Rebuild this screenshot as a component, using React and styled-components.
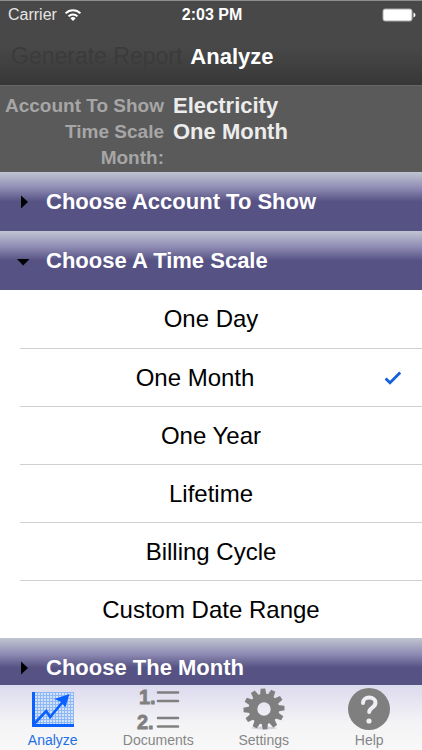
import React, { useState } from "react";
import styled, { createGlobalStyle } from "styled-components";

const scales = ["One Day", "One Month", "One Year", "Lifetime", "Billing Cycle", "Custom Date Range"];

const gearTeeth = Array.from({ length: 12 }, (_, i) => i * 30 - 3);

const WifiIcon = () => (
  <svg width="18" height="14" viewBox="0 0 18 14" fill="none" stroke="#fff" strokeWidth="2">
    <path d="M1.6 5.4a10.4 10.4 0 0 1 14.8 0" />
    <path d="M4.5 8.4a6.3 6.3 0 0 1 9 0" />
    <path d="M9 13 6.3 10.3a3.8 3.8 0 0 1 5.4 0z" fill="#fff" stroke="none" />
  </svg>
);

const BatteryIcon = () => (
  <svg width="34" height="14" viewBox="0 0 34 14">
    <rect x="1" y="1" width="29" height="12" rx="2" fill="#fff" stroke="#a9a9a9" />
    <path d="M31.5 4.6q2 .8 2 2.4t-2 2.4z" fill="#fff" />
  </svg>
);

const CheckIcon = () => (
  <svg width="18" height="14" viewBox="0 0 18 14" fill="none" stroke="#1460dc" strokeWidth="2.8">
    <path d="M1.6 7.4 6 11.8 16.2 1.6" />
  </svg>
);

const ArrowIcon = ({ open }) => (
  <svg width="14" height="14" viewBox="0 0 14 14">
    <path d={open ? "M1 5h12.5L7.2 11.5z" : "M5 .5v13L12 7z"} />
  </svg>
);

const ChartIcon = () => (
  <svg width="42" height="42" viewBox="0 0 42 42">
    <path d="M2 4h40v34H2z" fill="#d2e2fa" />
    <path
      d="M5.5 4v32M8.5 4v32M11.5 4v32M14.5 4v32M17.5 4v32M20.5 4v32M23.5 4v32M26.5 4v32M29.5 4v32M32.5 4v32M35.5 4v32M38.5 4v32M41.5 4v32M2 4.5h40M2 7.5h40M2 10.5h40M2 13.5h40M2 16.5h40M2 19.5h40M2 22.5h40M2 25.5h40M2 28.5h40M2 31.5h40M2 34.5h40"
      stroke="#8db7f5"
      strokeWidth="1"
    />
    <path d="M0 4h3v32h39v3H0z" fill="#0a5fff" />
    <path d="m2 36 12.2-13 4 6L31 13.5" fill="none" stroke="#0a5fff" strokeWidth="2.6" />
    <path d="m37.5 6-4.2 13.5-4.3-5.8-6.7-2.7z" fill="#0a5fff" />
  </svg>
);

const ListIcon = () => (
  <SListSvg width="42" height="42" viewBox="0 0 42 42" fill="#808080" stroke="#808080">
    <text x="2" y="16" strokeWidth="0.8">1.</text>
    <text x="0" y="41" strokeWidth="0.8">2.</text>
    <path d="M21 4.5h20M21 13h20M21 30h20M21 38.5h20" strokeWidth="2.6" strokeLinecap="round" />
  </SListSvg>
);

const GearIcon = () => (
  <svg width="42" height="42" viewBox="0 0 42 42" fill="#7f7f7f">
    <ellipse cx="21" cy="40" rx="13" ry="1.5" fill="#d2d2dc" />
    {gearTeeth.map((angle) => (
      <path key={angle} d="M17.8 7 18.7.5h4.6L24.2 7z" transform={`rotate(${angle} 21 21)`} />
    ))}
    <circle cx="21" cy="21" r="11" fill="none" stroke="#7f7f7f" strokeWidth="8.6" />
  </svg>
);

const HelpIcon = () => (
  <svg width="42" height="42" viewBox="0 0 42 42">
    <circle cx="21" cy="21" r="21" fill="#7f7f7f" />
    <path
      d="M15 15c0-3.6 2.6-5.4 6.2-5.4 3.7 0 6.3 1.9 6.3 5.1 0 5-6.3 4.6-6.3 9.3"
      fill="none"
      stroke="#eeeef4"
      strokeWidth="4"
      strokeLinecap="round"
    />
    <circle cx="21" cy="33" r="2.6" fill="#eeeef4" />
  </svg>
);

const tabs = [
  { name: "Analyze", Icon: ChartIcon },
  { name: "Documents", Icon: ListIcon },
  { name: "Settings", Icon: GearIcon },
  { name: "Help", Icon: HelpIcon },
];

const Section = ({ title, open, onToggle, children }) => (
  <section>
    <SSectionTitle>
      <SSectionButton type="button" aria-expanded={open} onClick={onToggle}>
        <ArrowIcon open={open} />
        {title}
      </SSectionButton>
    </SSectionTitle>
    {open && children}
  </section>
);

export default function App() {
  const [open, setOpen] = useState("scale");
  const [scale, setScale] = useState("One Month");
  const [tab, setTab] = useState("Analyze");

  const toggle = (name) => setOpen(open === name ? "" : name);

  return (
    <>
      <GlobalStyle />
      <SScreen>
        <SHeader>
          <SStatusBar>
            <SCarrier>
              Carrier
              <WifiIcon />
            </SCarrier>
            <STime>2:03 PM</STime>
            <SBattery>
              <BatteryIcon />
            </SBattery>
          </SStatusBar>
          <SNav>
            <SReportButton type="button">Generate Report</SReportButton>
            <STitle>Analyze</STitle>
          </SNav>
        </SHeader>
        <SSummary>
          <dt>Account To Show</dt>
          <dd>Electricity</dd>
          <dt>Time Scale</dt>
          <dd>{scale}</dd>
          <dt>Month:</dt>
          <dd></dd>
        </SSummary>
        <SMain>
          <Section title="Choose Account To Show" open={open === "account"} onToggle={() => toggle("account")} />
          <Section title="Choose A Time Scale" open={open === "scale"} onToggle={() => toggle("scale")}>
            <SOptions>
              {scales.map((name) => (
                <SOption key={name}>
                  <SOptionButton type="button" aria-pressed={name === scale} onClick={() => setScale(name)}>
                    <span>{name}</span>
                    {name === scale && <CheckIcon />}
                  </SOptionButton>
                </SOption>
              ))}
            </SOptions>
          </Section>
          <Section title="Choose The Month" open={open === "month"} onToggle={() => toggle("month")} />
        </SMain>
        <STabBar>
          {tabs.map(({ name, Icon }) => (
            <STab key={name} type="button" $active={name === tab} onClick={() => setTab(name)}>
              <Icon />
              {name}
            </STab>
          ))}
        </STabBar>
      </SScreen>
    </>
  );
}

const GlobalStyle = createGlobalStyle`
  * {
    box-sizing: border-box;
  }
  body {
    margin: 0;
    background: #fff;
    font-family: "Liberation Sans", Arial, sans-serif;
  }
  button {
    margin: 0;
    padding: 0;
    border: 0;
    background: none;
    font: inherit;
    color: inherit;
    cursor: pointer;
  }
  svg {
    display: block;
    flex: none;
  }
`;

const SListSvg = styled.svg`
  overflow: visible;
  font-size: 20px;
  font-weight: 700;
`;

const SScreen = styled.div`
  display: flex;
  flex-direction: column;
  height: 100vh;
`;

const SHeader = styled.header`
  flex: none;
  border-top: 1px solid #8c8e8c;
  background: linear-gradient(#484848 55%, #373737);
  color: #fff;
`;

const SStatusBar = styled.div`
  display: grid;
  grid-template-columns: 1fr auto 1fr;
  align-items: center;
  height: 27px;
  padding: 0 6px 0 8px;
  font-size: 16px;
`;

const SCarrier = styled.div`
  display: flex;
  align-items: center;
  gap: 7px;
  color: #e4e4e4;
`;

const STime = styled.div`
  font-weight: 700;
`;

const SBattery = styled.div`
  justify-self: end;
`;

const SNav = styled.div`
  display: flex;
  align-items: center;
  gap: 8px;
  height: 57px;
  padding: 0 11px;
`;

const SReportButton = styled.button`
  font-size: 23px;
  color: #3b3b3b;
`;

const STitle = styled.h1`
  margin: 0;
  font-size: 22px;
  font-weight: 700;
`;

const SSummary = styled.dl`
  flex: none;
  display: grid;
  grid-template-columns: 164px 1fr;
  grid-auto-rows: 26px;
  column-gap: 9px;
  margin: 0;
  padding: 7px 0 1px;
  border-top: 1px solid #676566;
  background: #5a5a5a;
  font-weight: 700;
  line-height: 26px;
  white-space: nowrap;

  dt {
    text-align: right;
    font-size: 19px;
    color: #a6a6a6;
  }
  dd {
    margin: 0;
    font-size: 22px;
    color: #ececec;
  }
`;

const SMain = styled.main`
  flex: 1;
  min-height: 0;
  overflow-y: auto;
  scrollbar-width: none;
`;

const SSectionTitle = styled.h2`
  margin: 0;
  font-size: 22px;
  font-weight: 700;
`;

const SSectionButton = styled.button`
  display: flex;
  align-items: center;
  gap: 16px;
  width: 100%;
  height: 59px;
  padding: 0 16px;
  background: linear-gradient(#c0c5d1, #8f8bb4 27%, #565283 50%, #565283);
  color: #fff;
`;

const SOptions = styled.ul`
  margin: 0;
  padding: 0;
  list-style: none;
`;

const SOption = styled.li`
  padding-left: 20px;

  & + & button {
    border-top: 1px solid #d0d0d2;
  }
`;

const SOptionButton = styled.button`
  display: flex;
  align-items: center;
  gap: 14px;
  width: 100%;
  height: 58px;
  padding-right: 20px;
  font-size: 24px;
  color: #000;

  span {
    flex: 1;
  }
`;

const STabBar = styled.nav`
  flex: none;
  display: grid;
  grid-template-columns: repeat(4, 1fr);
  height: 65px;
  background: linear-gradient(#dcdaee, #f4f4f6 60%, #f8f8f8);
`;

const STab = styled.button`
  display: flex;
  flex-direction: column;
  align-items: center;
  gap: 2px;
  padding-top: 3px;
  font-size: 14px;
  color: ${(props) => (props.$active ? "#1f6fe5" : "#868686")};
`;
